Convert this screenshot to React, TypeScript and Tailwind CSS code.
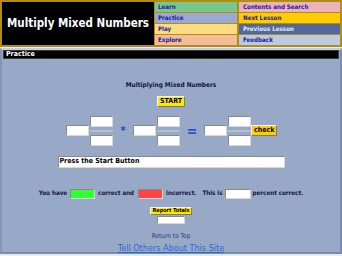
import React from 'react';

const navLeft = [
  { label: 'Learn', bg: 'bg-[#7cc68c]', text: 'text-[#1a1aa0]' },
  { label: 'Practice', bg: 'bg-[#9aaad2]', text: 'text-[#1a1aa0]' },
  { label: 'Play', bg: 'bg-[#fbdc80]', text: 'text-[#1a1aa0]' },
  { label: 'Explore', bg: 'bg-[#f6bb98]', text: 'text-[#1a1aa0]' },
];

const navRight = [
  { label: 'Contents and Search', bg: 'bg-[#eeb2ba]', text: 'text-[#1a1aa0]' },
  { label: 'Next Lesson', bg: 'bg-[#ffcc00]', text: 'text-[#1a1aa0]' },
  { label: 'Previous Lesson', bg: 'bg-[#52679c]', text: 'text-[#e8ecf8]' },
  { label: 'Feedback', bg: 'bg-[#bccbe3]', text: 'text-[#1a1aa0]' },
];

function Box({ w = 'w-[23px]', h = 'h-[11px]', bg = 'bg-white' }: { w?: string; h?: string; bg?: string }) {
  return <div className={`${w} ${h} ${bg} border border-[#8a8a8a] border-r-[#d8d8d8] border-b-[#d8d8d8]`} />;
}

function Fraction() {
  return (
    <div className="flex items-center gap-[1px]">
      <Box />
      <div className="flex flex-col items-center">
        <Box />
        <div className="w-[23px] h-[2px] my-[3px] bg-[#b4bfd4]" />
        <Box />
      </div>
    </div>
  );
}

export default function App() {
  return (
    <div className="w-[342px] h-[256px] bg-[#e6ebf3] overflow-hidden" style={{ fontFamily: '"DejaVu Sans Condensed", "DejaVu Sans", Verdana, sans-serif' }}>
      {/* header */}
      <div className="flex h-[47px] bg-[#b08e12] p-[2px] gap-[1px]">
        <div className="w-[152px] bg-black flex items-center justify-center">
          <span className="text-white font-bold text-[11.5px] whitespace-nowrap">Multiply Mixed Numbers</span>
        </div>
        <div className="flex-1 grid grid-cols-[82px_1fr] grid-rows-4 gap-x-[2px] gap-y-[1px]">
          {[0, 1, 2, 3].map((i) => (
            <React.Fragment key={i}>
              <div className={`${navLeft[i].bg} ${navLeft[i].text} text-[6.2px] font-bold pl-[3px] flex items-center leading-none`}>
                {navLeft[i].label}
              </div>
              <div className={`${navRight[i].bg} ${navRight[i].text} text-[6.2px] font-bold pl-[4px] flex items-center leading-none`}>
                {navRight[i].label}
              </div>
            </React.Fragment>
          ))}
        </div>
      </div>

      {/* main frame */}
      <div className="mt-[1px] h-[206px] bg-[#98a9c7] border-2 border-[#7c8cac] border-t-[#c4cedf] border-l-[#8495b6] flex flex-col">
        <div className="mx-[1px] h-[14px] bg-black border border-[#3a3a3a] flex items-center pl-[2px]">
          <span className="text-white font-bold text-[7px] leading-none">Practice</span>
        </div>

        <div className="flex flex-col items-center">
          <div className="mt-[23px] text-[6.5px] font-bold text-[#141440] leading-none">Multiplying Mixed Numbers</div>

          <div className="mt-[7px] h-[11px] px-[2px] bg-[#ffe800] border border-[#f4f4f4] border-r-[#7a7a7a] border-b-[#7a7a7a] flex items-center text-[7px] font-bold text-black leading-none">
            START
          </div>

          <div className="mt-[9px] flex items-center w-full pl-[64px]">
            <Fraction />
            <span className="w-[20px] text-center text-[#3040d0] font-bold text-[11px] leading-none">*</span>
            <Fraction />
            <span className="w-[24px] text-center text-[#3a4cc8] font-bold text-[14px] leading-none">=</span>
            <Fraction />
            <div className="h-[11px] px-[2px] bg-[#ffcc00] border border-[#f4f4f4] border-r-[#7a7a7a] border-b-[#7a7a7a] flex items-center text-[7px] font-bold text-black leading-none">
              check
            </div>
          </div>

          <div className="mt-[10px] w-[227px] h-[12px] bg-white border border-[#8a8a8a] border-r-[#d8d8d8] border-b-[#d8d8d8] flex items-center pl-[1px] text-[7px] font-bold text-black leading-none">
            Press the Start Button
          </div>

          <div className="mt-[21px] flex items-center text-[6.2px] font-bold text-[#141440] leading-none">
            <span>You have</span>
            <div className="mx-[3px]"><Box w="w-[25px]" h="h-[10px]" bg="bg-[#33ff33]" /></div>
            <span>correct and</span>
            <div className="ml-[4px] mr-[3px]"><Box w="w-[25px]" h="h-[10px]" bg="bg-[#ff4444]" /></div>
            <span>incorrect.</span>
            <span className="ml-[6px]">This is</span>
            <div className="mx-[2px]"><Box w="w-[26px]" h="h-[10px]" /></div>
            <span>percent correct.</span>
          </div>

          <div className="mt-[8px] h-[8px] px-[1px] bg-[#ffe800] border border-[#f4f4f4] border-r-[#7a7a7a] border-b-[#7a7a7a] flex items-center text-[5.5px] font-bold text-black leading-none">
            Report Totals
          </div>
          <div className="mt-[1px]"><Box w="w-[28px]" h="h-[8px]" /></div>

          <div className="mt-[9px] text-[6.5px] text-[#2a3a80] leading-none">Return to Top</div>

          <div className="mt-[5px] text-[9px] text-[#2a68d8] underline leading-none">Tell Others About This Site</div>
        </div>
      </div>
    </div>
  );
}
